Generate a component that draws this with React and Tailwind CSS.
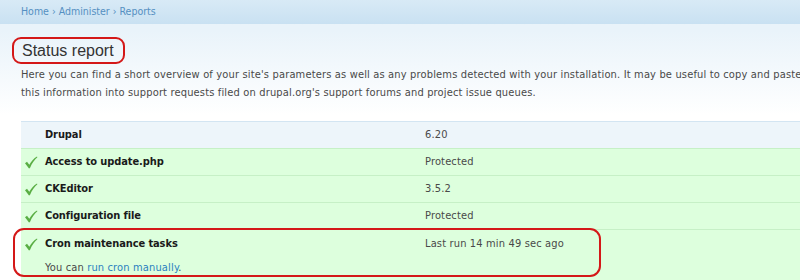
import { useState } from 'react';

const rows = [
  { label: 'Drupal', value: '6.20', ok: false },
  { label: 'Access to update.php', value: 'Protected', ok: true },
  { label: 'CKEditor', value: '3.5.2', ok: true },
  { label: 'Configuration file', value: 'Protected', ok: true },
];

function Check() {
  return (
    <svg width="14" height="13" viewBox="0 0 14 13" className="shrink-0">
      <path d="M1 7.2 L3 5.8 L5.3 8.8 C7.4 5.2 9.8 2.4 13 0.6 L13.4 1.3 C10.6 3.6 8 7.2 6 12 L5 12.4 Z" fill="#5aae44" />
    </svg>
  );
}

function Row({ r }) {
  return (
    <div className={`flex h-[27px] items-center border-t ${r.ok ? 'bg-[#ddffdd] border-[#c6f0c6]' : 'bg-[#edf5fa] border-[#d3e5f2]'}`}>
      <div className="w-[24px] flex justify-end pr-[7px]">{r.ok && <Check />}</div>
      <div className="w-[380px] font-bold text-[#1a1a1a] tracking-[-0.1px]">{r.label}</div>
      <div className="text-[#494949] tracking-[0.15px]">{r.value}</div>
    </div>
  );
}

export default function App() {
  const [cron] = useState({ label: 'Cron maintenance tasks', value: 'Last run 14 min 49 sec ago' });

  return (
    <div className="w-[800px] h-[280px] overflow-hidden bg-gradient-to-b from-[#e9f3fa] from-[30px] to-white to-[115px] text-[11px] text-[#494949]"
      style={{ fontFamily: '"DejaVu Sans Condensed", "DejaVu Sans", Verdana, sans-serif' }}>
      <div className="h-[24px] bg-gradient-to-b from-[#d8eaf6] to-[#c9e1f2] flex items-center pl-[21px] text-[10.5px] text-[#5590c2]">
        Home › Administer › Reports
      </div>

      <div className="pl-[12px] pt-[13px]">
        <div className="inline-block border-2 border-[#d41818] rounded-[9px] pl-[8px] pr-[9px] h-[27px] leading-[23px]">
          <span className="text-[16px] text-[#333]" style={{ fontFamily: '"Liberation Sans", Arial, sans-serif' }}>Status report</span>
        </div>
      </div>

      <p className="pl-[21px] pt-[2px] leading-[18px] whitespace-nowrap tracking-[0.16px]">
        Here you can find a short overview of your site's parameters as well as any problems detected with your installation. It may be useful to copy and paste<br />
        this information into support requests filed on drupal.org's support forums and project issue queues.
      </p>

      <div className="ml-[21px] mt-[19px]">
        {rows.map(r => <Row key={r.label} r={r} />)}
        <div className="relative bg-[#ddffdd] border-t border-[#c6f0c6] h-[60px]">
          <div className="flex h-[29px] items-center">
            <div className="w-[24px] flex justify-end pr-[7px]"><Check /></div>
            <div className="w-[380px] font-bold text-[#1a1a1a] tracking-[-0.1px]">{cron.label}</div>
            <div className="text-[#494949] tracking-[0.15px]">{cron.value}</div>
          </div>
          <div className="pl-[24px] leading-[18px] tracking-[0.15px]">
            You can <a href="#" className="text-[#2b7fc0]">run cron manually</a>.
          </div>
          <div className="absolute left-[-8px] top-[-2px] w-[588px] h-[49px] border-2 border-[#d41818] rounded-[11px] pointer-events-none" />
        </div>
      </div>
    </div>
  );
}
